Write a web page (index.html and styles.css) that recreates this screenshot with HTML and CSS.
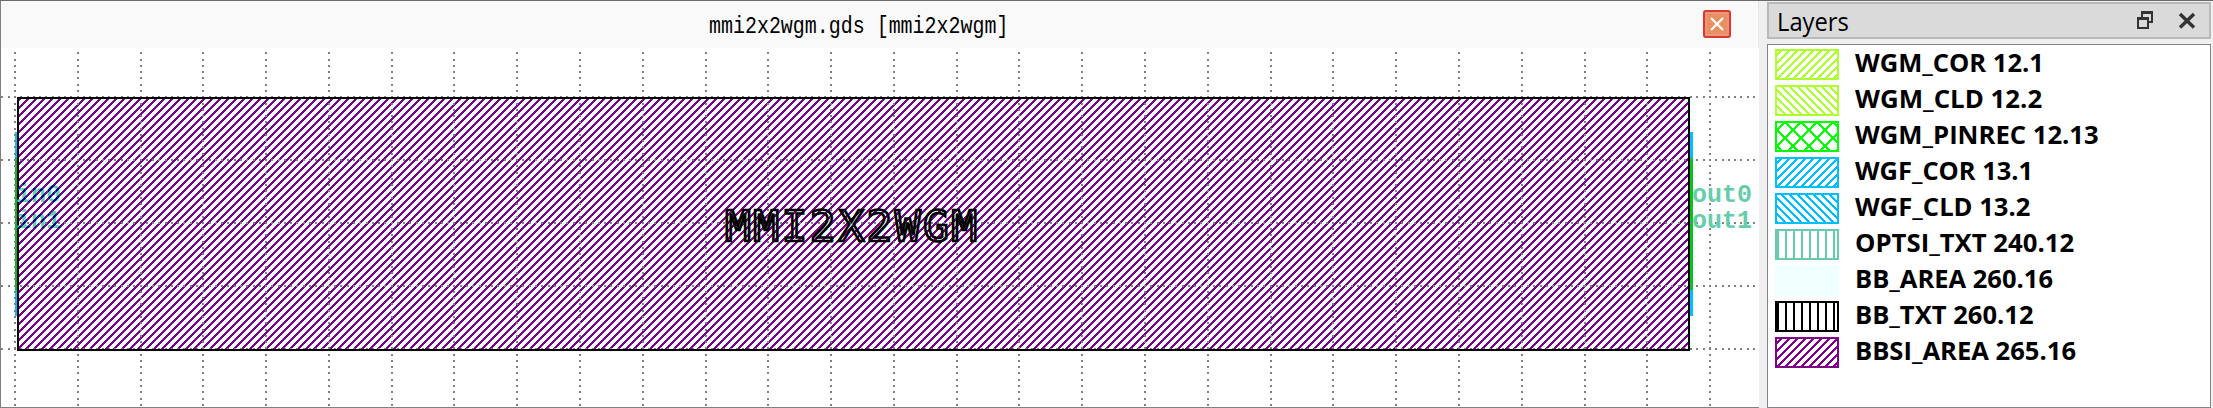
FILE: index.html
```html
<!DOCTYPE html>
<html lang="en">
<head>
<meta charset="utf-8">
<title>mmi2x2wgm.gds</title>
<link rel="stylesheet" href="styles.css">
</head>
<body>
<div class="app">
  <main class="view">
    <header class="view-title">
      <span class="file-name">mmi2x2wgm.gds [mmi2x2wgm]</span>
      <button class="close" aria-label="Close"><svg width="28" height="28" viewBox="0 0 28 28"><rect x="1" y="1" width="26" height="26" rx="2" fill="#ec9484" stroke="#d93a2b" stroke-width="2"/><rect x="4" y="4" width="20" height="20" fill="#e98f60"/><path d="M8 8 20 20M20 8 8 20" stroke="#fff" stroke-width="2.2"/></svg></button>
    </header>
    <svg class="layout" width="1758" height="358" viewBox="1 48 1758 358">
      <defs>
        <pattern id="hatch" width="8" height="8" patternUnits="userSpaceOnUse"><path d="M5 0h3v1h-3zM4 1h3v1h-3zM3 2h3v1h-3zM2 3h3v1h-3zM1 4h3v1h-3zM0 5h3v1h-3zM0 6h2v1h-2zM7 6h1v1h-1zM0 7h1v1h-1zM6 7h2v1h-2z" fill="#80008b"/></pattern>
        <pattern id="hatch-navy" width="8" height="8" patternUnits="userSpaceOnUse"><path d="M5 0h3v1h-3zM4 1h3v1h-3zM3 2h3v1h-3zM2 3h3v1h-3zM1 4h3v1h-3zM0 5h3v1h-3zM0 6h2v1h-2zM7 6h1v1h-1zM0 7h1v1h-1zM6 7h2v1h-2z" fill="#00008b"/></pattern>
      </defs>
      <rect x="17" y="97" width="1676" height="254" fill="#f0ffff"/>
      <rect x="18" y="98" width="1671" height="252" fill="url(#hatch)"/>
      <g class="pins">
        <path d="M15 132h2v184h-2z" fill="#00bfff"/><path d="M15 158h2v132h-2z" fill="#00b919"/>
        <path d="M1690 132h3v184h-3z" fill="#00bfff"/><path d="M1690 158h3v132h-3z" fill="#00c814"/>
      </g>
      <g id="grid" class="grid"></g>
      <rect x="18" y="98" width="1671" height="252" class="outline"/>
      <g class="pin-text"><text x="16" y="202">in0</text><text x="16" y="228">in1</text><text x="1692" y="202">out0</text><text x="1692" y="228">out1</text></g>
      <g class="pin-text crossed"><text x="16" y="202">in0</text><text x="16" y="228">in1</text></g>
      <text class="cell-name" x="725" y="240.500">MMI2X2WGM</text>
    </svg>
  </main>
  <aside class="dock">
    <header class="dock-title"><span>Layers</span>
      <svg width="60" height="20" viewBox="0 0 60 20" fill="none" stroke="#333" ><path d="M5 7V2h10v9h-5" stroke-width="2"/><path d="M4 1.5h12" stroke-width="3"/><path d="M1 8h10v9H1z" stroke-width="2"/><path d="M0 7.5h12" stroke-width="3"/><path d="M43 3 57 16.500M57 3 43 16.500" stroke-width="3.4"/></svg>
    </header>
    <ul class="layers" id="layers"></ul>
  </aside>
</div>
<script src="app.js"></script>
</body>
</html>
```
FILE: styles.css
```css
* { box-sizing: border-box; }
body { margin: 0; background: #f0f0f0; }
.app { display: flex; width: 2213px; height: 408px; gap: 8px; border-top: 1px solid #6e6a6b; }
.view { width: 1759px; height: 407px; border-left: 1px solid #808080; border-bottom: 1px solid #808080; background: #fff; }
.view-title { display: flex; align-items: flex-start; justify-content: flex-end; position: relative; height: 47px; padding: 9px 27px 0 0; background: #f9f9f9; border-right: 1px solid #e8e8e8; }
.file-name { position: absolute; left: 708px; top: 12px; font: 24px/28px "Liberation Mono", monospace; transform: scaleX(.8315); transform-origin: left; white-space: pre; color: #000; }
.close { width: 28px; height: 28px; padding: 0; border: 0; background: none; display: block; }
.layout { display: block; shape-rendering: crispEdges; }
.grid { stroke: #808080; stroke-width: 2; stroke-dasharray: 2 4.278; }
.outline { fill: none; stroke: #000; stroke-width: 2; }
.pin-text { font: bold 25px "Liberation Mono", monospace; fill: #66cdaa; }
.pin-text.crossed { fill: url(#hatch-navy); }
.cell-name { font: 43px "DejaVu Sans Mono", monospace; letter-spacing: 2.4px; fill: none; stroke: #000; stroke-width: 2.6; stroke-linejoin: miter; }
.dock { width: 444px; height: 407px; display: flex; flex-direction: column; gap: 5px; padding-top: 1px; }
.dock-title { height: 37px; border: 2px solid #b9b9b9; background: #dadada; display: flex; align-items: center; justify-content: space-between; padding: 0 12px 0 8px; font: 25px/33px "Open Sans", sans-serif; }
.dock-title svg { margin-top: 1px; }
.dock-title span { display: inline-block; padding-top: 2px; transform: scaleX(.95); transform-origin: left; }
.layers { flex: 1; list-style: none; margin: 0; padding: 4px 0 0 7px; background: #fff; border: 1px solid #82828c; display: flex; flex-direction: column; gap: 5px; }
.layers li { height: 31px; display: flex; align-items: center; gap: 16px; font: bold 25px/31px "Open Sans", sans-serif; color: #000; white-space: pre; }
.layers span { padding-bottom: 4px; }
.layers svg { shape-rendering: crispEdges; display: block; }
```
FILE: app.js
```js
const NS = 'http://www.w3.org/2000/svg';
function el(name, attrs, parent) {
  const n = document.createElementNS(NS, name);
  for (const k in attrs) n.setAttribute(k, attrs[k]);
  parent.appendChild(n);
  return n;
}
const grid = document.getElementById('grid');
const step = 62.78;
for (let i = 0; i < 28; i++) {
  const x = Math.round(15 + i * step);
  el('line', {x1: x, x2: x, y1: 52.3, y2: 406}, grid);
}
for (let i = 0; i < 5; i++) {
  const y = Math.round(97 + i * 63);
  el('line', {x1: 1.4, x2: 1756, y1: y, y2: y}, grid);
}
const layers = [
  ['WGM_COR 12.1', '#adff2f', 'up', 189],
  ['WGM_CLD 12.2', '#adff2f', 'down', 187],
  ['WGM_PINREC 12.13', '#00ff00', 'cross', 244],
  ['WGF_COR 13.1', '#00bfff', 'up', 178],
  ['WGF_CLD 13.2', '#00bfff', 'down', 175],
  ['OPTSI_TXT 240.12', '#66cdaa', 'bars', 219],
  ['BB_AREA 260.16', '#f0ffff', 'solid', 198],
  ['BB_TXT 260.12', '#000000', 'bars', 179],
  ['BBSI_AREA 265.16', '#80008b', 'up', 221]
];
const list = document.getElementById('layers');
layers.forEach(([name, color, kind, width]) => {
  const li = document.createElement('li');
  const s = el('svg', {width: 64, height: 31, viewBox: '0 0 64 31'}, li);
  if (kind === 'solid') el('rect', {width: 64, height: 31, fill: color}, s);
  else {
    let d = '';
    if (kind === 'up') for (let x = 8; x < 98; x += 8) d += `M${x} 0L${x - 31} 31`;
    if (kind === 'down') for (let x = -27; x < 64; x += 8) d += `M${x} 0L${x + 31} 31`;
    if (kind === 'cross') for (let x = -39; x < 100; x += 16) d += `M${x} 0L${x + 31} 31M${x + 2} 0L${x - 29} 31`;
    if (kind === 'bars') for (let x = 3; x < 64; x += 8) d += `M${x} 0V31`;
    el('path', {d, stroke: color, 'stroke-width': kind === 'bars' ? 2 : 1.8, fill: 'none'}, s);
    el('rect', {x: 1, y: 1, width: 62, height: 29, stroke: color, 'stroke-width': 2, fill: 'none'}, s);
  }
  const label = document.createElement('span');
  label.textContent = name;
  li.appendChild(label);
  list.appendChild(li);
  label.style.transformOrigin = 'left';
  label.style.transform = `scaleX(${width / label.offsetWidth})`;
});
```
